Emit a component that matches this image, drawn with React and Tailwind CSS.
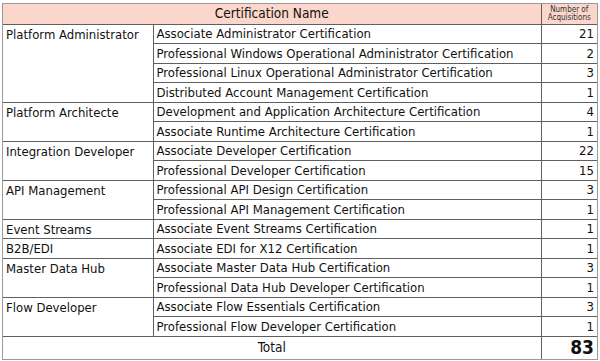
const groups = [
  {
    name: 'Platform Administrator',
    items: [
      ['Associate Administrator Certification', 21],
      ['Professional Windows Operational Administrator Certification', 2],
      ['Professional Linux Operational Administrator Certification', 3],
      ['Distributed Account Management Certification', 1],
    ],
  },
  {
    name: 'Platform Architecte',
    items: [
      ['Development and Application Architecture Certification', 4],
      ['Associate Runtime Architecture Certification', 1],
    ],
  },
  {
    name: 'Integration Developer',
    items: [
      ['Associate Developer Certification', 22],
      ['Professional Developer Certification', 15],
    ],
  },
  {
    name: 'API Management',
    items: [
      ['Professional API Design Certification', 3],
      ['Professional API Management Certification', 1],
    ],
  },
  {
    name: 'Event Streams',
    items: [['Associate Event Streams Certification', 1]],
  },
  {
    name: 'B2B/EDI',
    items: [['Associate EDI for X12 Certification', 1]],
  },
  {
    name: 'Master Data Hub',
    items: [
      ['Associate Master Data Hub Certification', 3],
      ['Professional Data Hub Developer Certification', 1],
    ],
  },
  {
    name: 'Flow Developer',
    items: [
      ['Associate Flow Essentials Certification', 3],
      ['Professional Flow Developer Certification', 1],
    ],
  },
];

const total = groups.reduce((sum, g) => sum + g.items.reduce((s, [, n]) => s + n, 0), 0);

const cell = 'border border-[#5f5f5f] leading-none';

export default function App() {
  let rowIndex = 0;

  return (
    <div className="min-h-[361px] w-[600px] bg-white pl-[2px] pt-[3px] font-['DejaVu_Sans_Condensed','DejaVu_Sans',sans-serif] text-[#111]">
      <div className="w-[596px] border border-[#9a9a9a]">
        <table className="w-full table-fixed border-collapse border-hidden">
          <colgroup>
            <col className="w-[150px]" />
            <col className="w-[388px]" />
            <col />
          </colgroup>
          <thead>
            <tr className="h-[20px] bg-[#fbd6ca]">
              <th colSpan={2} className={`${cell} text-center text-[13.5px] font-normal`}>
                Certification Name
              </th>
              <th className={`${cell} text-center text-[8px] font-normal leading-[9px] text-[#333]`}>
                Number of
                <br />
                Acquisitions
              </th>
            </tr>
          </thead>
          <tbody>
            {groups.map((group) =>
              group.items.map(([title, count], i) => {
                const h = rowIndex++ % 2 === 0 ? 'h-[19px]' : 'h-[20px]';
                return (
                  <tr key={title} className={h}>
                    {i === 0 ? (
                      <td rowSpan={group.items.length} className={`${cell} px-[3px] pt-[3px] align-top text-[13px]`}>
                        {group.name}
                      </td>
                    ) : null}
                    <td className={`${cell} px-[3px] text-[13px]`}>{title}</td>
                    <td className={`${cell} px-[3px] text-right text-[13px]`}>{count}</td>
                  </tr>
                );
              })
            )}
            <tr className="h-[23px]">
              <td colSpan={2} className={`${cell} text-center text-[13.5px]`}>
                Total
              </td>
              <td className={`${cell} px-[3px] text-right text-[19px] font-bold`}>{total}</td>
            </tr>
          </tbody>
        </table>
      </div>
    </div>
  );
}
